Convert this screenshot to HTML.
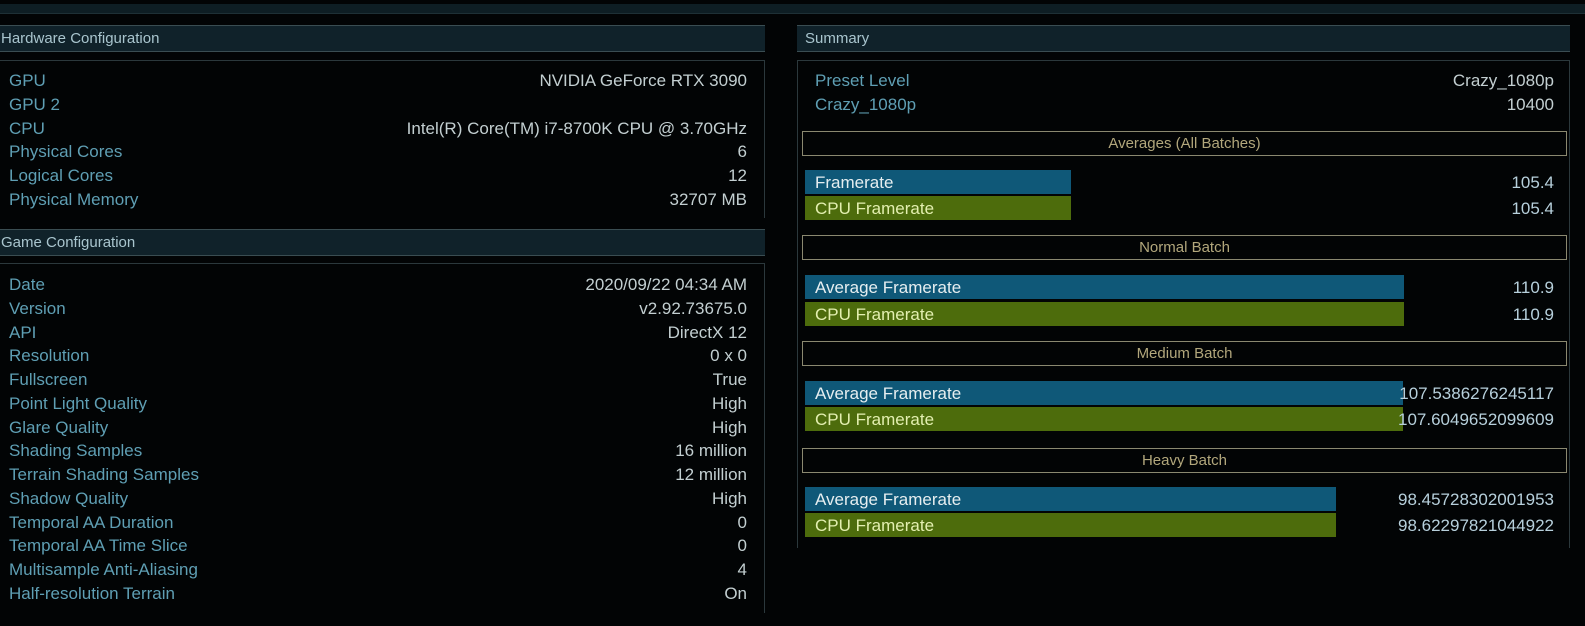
<!DOCTYPE html>
<html><head><style>
*{margin:0;padding:0;box-sizing:border-box}
body{width:1585px;height:626px;background:#020405;font-family:"Liberation Sans",sans-serif;position:relative;overflow:hidden;color:#6fa9bb}
.a{position:absolute}
.top{left:0;top:4px;width:1585px;height:10px;background:#0e1e24;border-bottom:1px solid #1e3036}
.hd{background:#10222a;border-top:1px solid #3a4d52;border-bottom:1px solid #3a4d52;height:27px;font-size:15px;line-height:26px;color:#a9c5ce;padding-left:1px}
.box{border:1px solid #2b383c;border-bottom:none}
.row{position:absolute;font-size:17px;height:24px;line-height:24px}
.l{color:#5f9fb4}
.v{color:#c3cfd1;text-align:right}
.bb{border:1px solid #8a8870;height:25px;font-size:15px;line-height:24px;text-align:center;color:#b2a77c}
.bar{position:absolute;height:24px;font-size:17px;line-height:25px;padding-left:10px;color:#e6eef0}
.bl{background:#0f5878}.gr{background:#4d6c0c;color:#e3efb0}
.n{position:absolute;right:31px;font-size:17px;line-height:25px;color:#b7d0dc;text-align:right}
</style></head><body>
<div class="a top"></div>
<div class="a hd" style="left:0;top:25px;width:765px">Hardware Configuration</div>
<div class="a box" style="left:0;top:60px;width:765px;height:158px;border-left:none"></div>
<div class="a hd" style="left:0;top:229px;width:765px">Game Configuration</div>
<div class="a box" style="left:0;top:263px;width:765px;height:350px;border-left:none"></div>
<div class="a hd" style="left:797px;top:25px;width:773px;padding-left:8px">Summary</div>
<div class="a box" style="left:797px;top:60px;width:773px;height:488px"></div>

<div id="L"></div>
<script>
var hw=[["GPU","NVIDIA GeForce RTX 3090"],["GPU 2",""],["CPU","Intel(R) Core(TM) i7-8700K CPU @ 3.70GHz"],["Physical Cores","6"],["Logical Cores","12"],["Physical Memory","32707 MB"]];
var gm=[["Date","2020/09/22 04:34 AM"],["Version","v2.92.73675.0"],["API","DirectX 12"],["Resolution","0 x 0"],["Fullscreen","True"],["Point Light Quality","High"],["Glare Quality","High"],["Shading Samples","16 million"],["Terrain Shading Samples","12 million"],["Shadow Quality","High"],["Temporal AA Duration","0"],["Temporal AA Time Slice","0"],["Multisample Anti-Aliasing","4"],["Half-resolution Terrain","On"]];
var h="";
function put(arr,y0,dy){arr.forEach(function(r,i){var y=y0+i*dy;h+='<div class="row l" style="left:9px;top:'+y+'px">'+r[0]+'</div><div class="row v" style="right:838px;top:'+y+'px">'+r[1]+'</div>';});}
put(hw,69,23.8);put(gm,273,23.75);
document.getElementById("L").innerHTML=h;
</script>

<div class="row l" style="left:815px;top:69px">Preset Level</div>
<div class="row v" style="right:31px;top:69px">Crazy_1080p</div>
<div class="row l" style="left:815px;top:93px">Crazy_1080p</div>
<div class="row v" style="right:31px;top:93px">10400</div>

<div class="a bb" style="left:802px;top:131px;width:765px">Averages (All Batches)</div>
<div class="bar bl" style="left:805px;top:170px;width:266px">Framerate</div>
<div class="bar gr" style="left:805px;top:196px;width:266px">CPU Framerate</div>
<div class="n" style="top:170px">105.4</div>
<div class="n" style="top:196px">105.4</div>

<div class="a bb" style="left:802px;top:235px;width:765px">Normal Batch</div>
<div class="bar bl" style="left:805px;top:275px;width:599px">Average Framerate</div>
<div class="bar gr" style="left:805px;top:302px;width:599px">CPU Framerate</div>
<div class="n" style="top:275px">110.9</div>
<div class="n" style="top:302px">110.9</div>

<div class="a bb" style="left:802px;top:341px;width:765px">Medium Batch</div>
<div class="bar bl" style="left:805px;top:381px;width:598px">Average Framerate</div>
<div class="bar gr" style="left:805px;top:407px;width:598px">CPU Framerate</div>
<div class="n" style="top:381px">107.5386276245117</div>
<div class="n" style="top:407px">107.6049652099609</div>

<div class="a bb" style="left:802px;top:448px;width:765px">Heavy Batch</div>
<div class="bar bl" style="left:805px;top:487px;width:531px">Average Framerate</div>
<div class="bar gr" style="left:805px;top:513px;width:531px">CPU Framerate</div>
<div class="n" style="top:487px">98.45728302001953</div>
<div class="n" style="top:513px">98.62297821044922</div>
</body></html>
